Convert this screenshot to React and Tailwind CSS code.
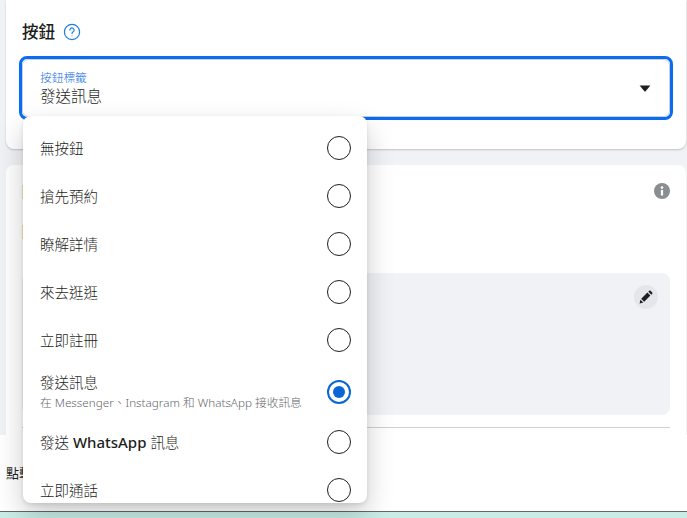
import React from "react";

const options = [
  { label: "無按鈕" },
  { label: "搶先預約" },
  { label: "瞭解詳情" },
  { label: "來去逛逛" },
  { label: "立即註冊" },
  { label: "發送訊息", sub: "在 Messenger、Instagram 和 WhatsApp 接收訊息", selected: true },
  { label: "發送", latin: "WhatsApp", tail: "訊息" },
  { label: "立即通話" },
];

const Radio = ({ selected }) =>
  selected ? (
    <div className="flex h-6 w-6 shrink-0 items-center justify-center rounded-full border-2 border-[#0866d6]">
      <div className="h-3 w-3 rounded-full bg-[#0866d6]" />
    </div>
  ) : (
    <div className="h-6 w-6 shrink-0 rounded-full border border-[#1c1e21]" />
  );

const App = () => {
  return (
    <div
      className="relative flex h-[518px] w-[687px] flex-col overflow-hidden bg-[#f0f2f5] text-[#1c1e21]"
      style={{ fontFamily: '"Noto Sans", "Noto Sans CJK TC", sans-serif' }}
    >
      {/* top card with select */}
      <div className="ml-[6px] mr-px h-[149px] shrink-0 rounded-b-lg bg-white px-[13px] pt-[19px] shadow-[0_1px_2px_rgba(0,0,0,0.2)]">
        <div className="flex h-[26px] items-center gap-[8px] pl-[3px]">
          <span className="text-[16.5px] leading-[26px] font-medium">按鈕</span>
          <svg width="18" height="18" viewBox="0 0 18 18" fill="none" stroke="#1b7fd8" strokeWidth="1.2">
            <circle cx="9" cy="9" r="7.6" />
            <path d="M6.9 7.1a2.1 2.1 0 1 1 3.3 1.7c-.8.5-1.2.9-1.2 1.8" strokeLinecap="round" />
            <circle cx="9" cy="12.8" r="0.5" fill="#1b7fd8" stroke="none" />
          </svg>
        </div>
        <div className="mt-[11px] h-[64px] rounded-lg border-[3px] border-[#0a6cf5]">
          <div className="flex h-full items-center justify-between rounded-md border border-[#ccd0d5] pr-[18px] pl-[17px]">
            <div className="flex flex-col">
              <span className="text-[11.7px] leading-[17px] font-light text-[#1a6fe0]">按鈕標籤</span>
              <span className="text-[15.5px] leading-[21px] font-light">發送訊息</span>
            </div>
            <svg width="12" height="7" viewBox="0 0 12 7">
              <path d="M0.6 0.5h10.8L6.6 6.2a.8.8 0 0 1-1.2 0Z" fill="#1c1e21" />
            </svg>
          </div>
        </div>
      </div>

      {/* second card, mostly hidden by the menu */}
      <div className="relative mt-4 ml-[6px] mr-px flex-1 overflow-hidden rounded-t-lg bg-white pr-4 pl-[16px]">
        {/* edges of the text that sits behind the menu */}
        <div className="absolute top-[20px] left-[16px] h-[14px] w-px bg-[#f5e7b0]" />
        <div className="absolute top-[60px] left-[16px] h-[14px] w-px bg-[#f5e7b0]" />
        <div className="flex h-[50px] items-center justify-end pt-[1px]">
          <svg width="16" height="16" viewBox="0 0 16 16">
            <circle cx="8" cy="8" r="8" fill="#8a8d91" />
            <circle cx="8" cy="4.6" r="1.3" fill="#fff" />
            <rect x="6.9" y="7" width="2.2" height="5.6" rx="0.6" fill="#fff" />
          </svg>
        </div>
        <div className="mt-[58px] flex h-[142px] justify-end rounded-lg bg-[#f0f2f5] p-3">
          <div className="flex h-6 w-6 items-center justify-center rounded-full bg-[#e4e6eb]">
            {/* solid pencil */}
            <svg width="14" height="14" viewBox="0 0 14 14" fill="#1c1e21">
              <path d="M.6 13.4l.8-3.7 2.9 2.9Z" />
              <path d="M2.2 8.8l6.2-6.2 3 3-6.2 6.2Z" />
              <path d="M9.3 1.7l.9-.9a1 1 0 0 1 1.4 0l1.6 1.6a1 1 0 0 1 0 1.4l-.9.9Z" />
            </svg>
          </div>
        </div>
        <div className="mt-3 h-px bg-[#ced0d4]" />
      </div>

      {/* bottom bar */}
      <div className="flex h-[76px] shrink-0 items-center bg-white pt-[2px] pl-[6px] text-[13px]">
        點擊
      </div>
      <div className="h-px shrink-0 bg-[#65676b]" />
      <div className="h-[6px] shrink-0 bg-[#c9ece6]" />

      {/* open dropdown menu */}
      <div className="absolute top-[116px] left-[23px] h-[387px] w-[344px] overflow-hidden rounded-lg bg-white pt-2 shadow-[0_12px_28px_0_rgba(0,0,0,0.2),0_2px_4px_0_rgba(0,0,0,0.1)]">
        {options.map((o) => (
          <div
            key={o.label + (o.latin || "")}
            className={`flex items-center justify-between pr-4 pl-[17px] ${o.sub ? "h-[54px] pt-[2px]" : "h-12"}`}
          >
            <div className={`flex flex-col ${o.sub ? "-mt-[2px]" : ""}`}>
              <span className="text-[14.5px] leading-[20px] font-light text-[#1c1e21]">
                {o.label}
                {o.latin && <span className="text-[15px] font-medium"> {o.latin} </span>}
                {o.tail}
              </span>
              {o.sub && <span className="mt-[1px] text-[11.7px] leading-[18px] font-light text-[#65676b]">{o.sub}</span>}
            </div>
            <Radio selected={o.selected} />
          </div>
        ))}
      </div>
    </div>
  );
};

export default App;
